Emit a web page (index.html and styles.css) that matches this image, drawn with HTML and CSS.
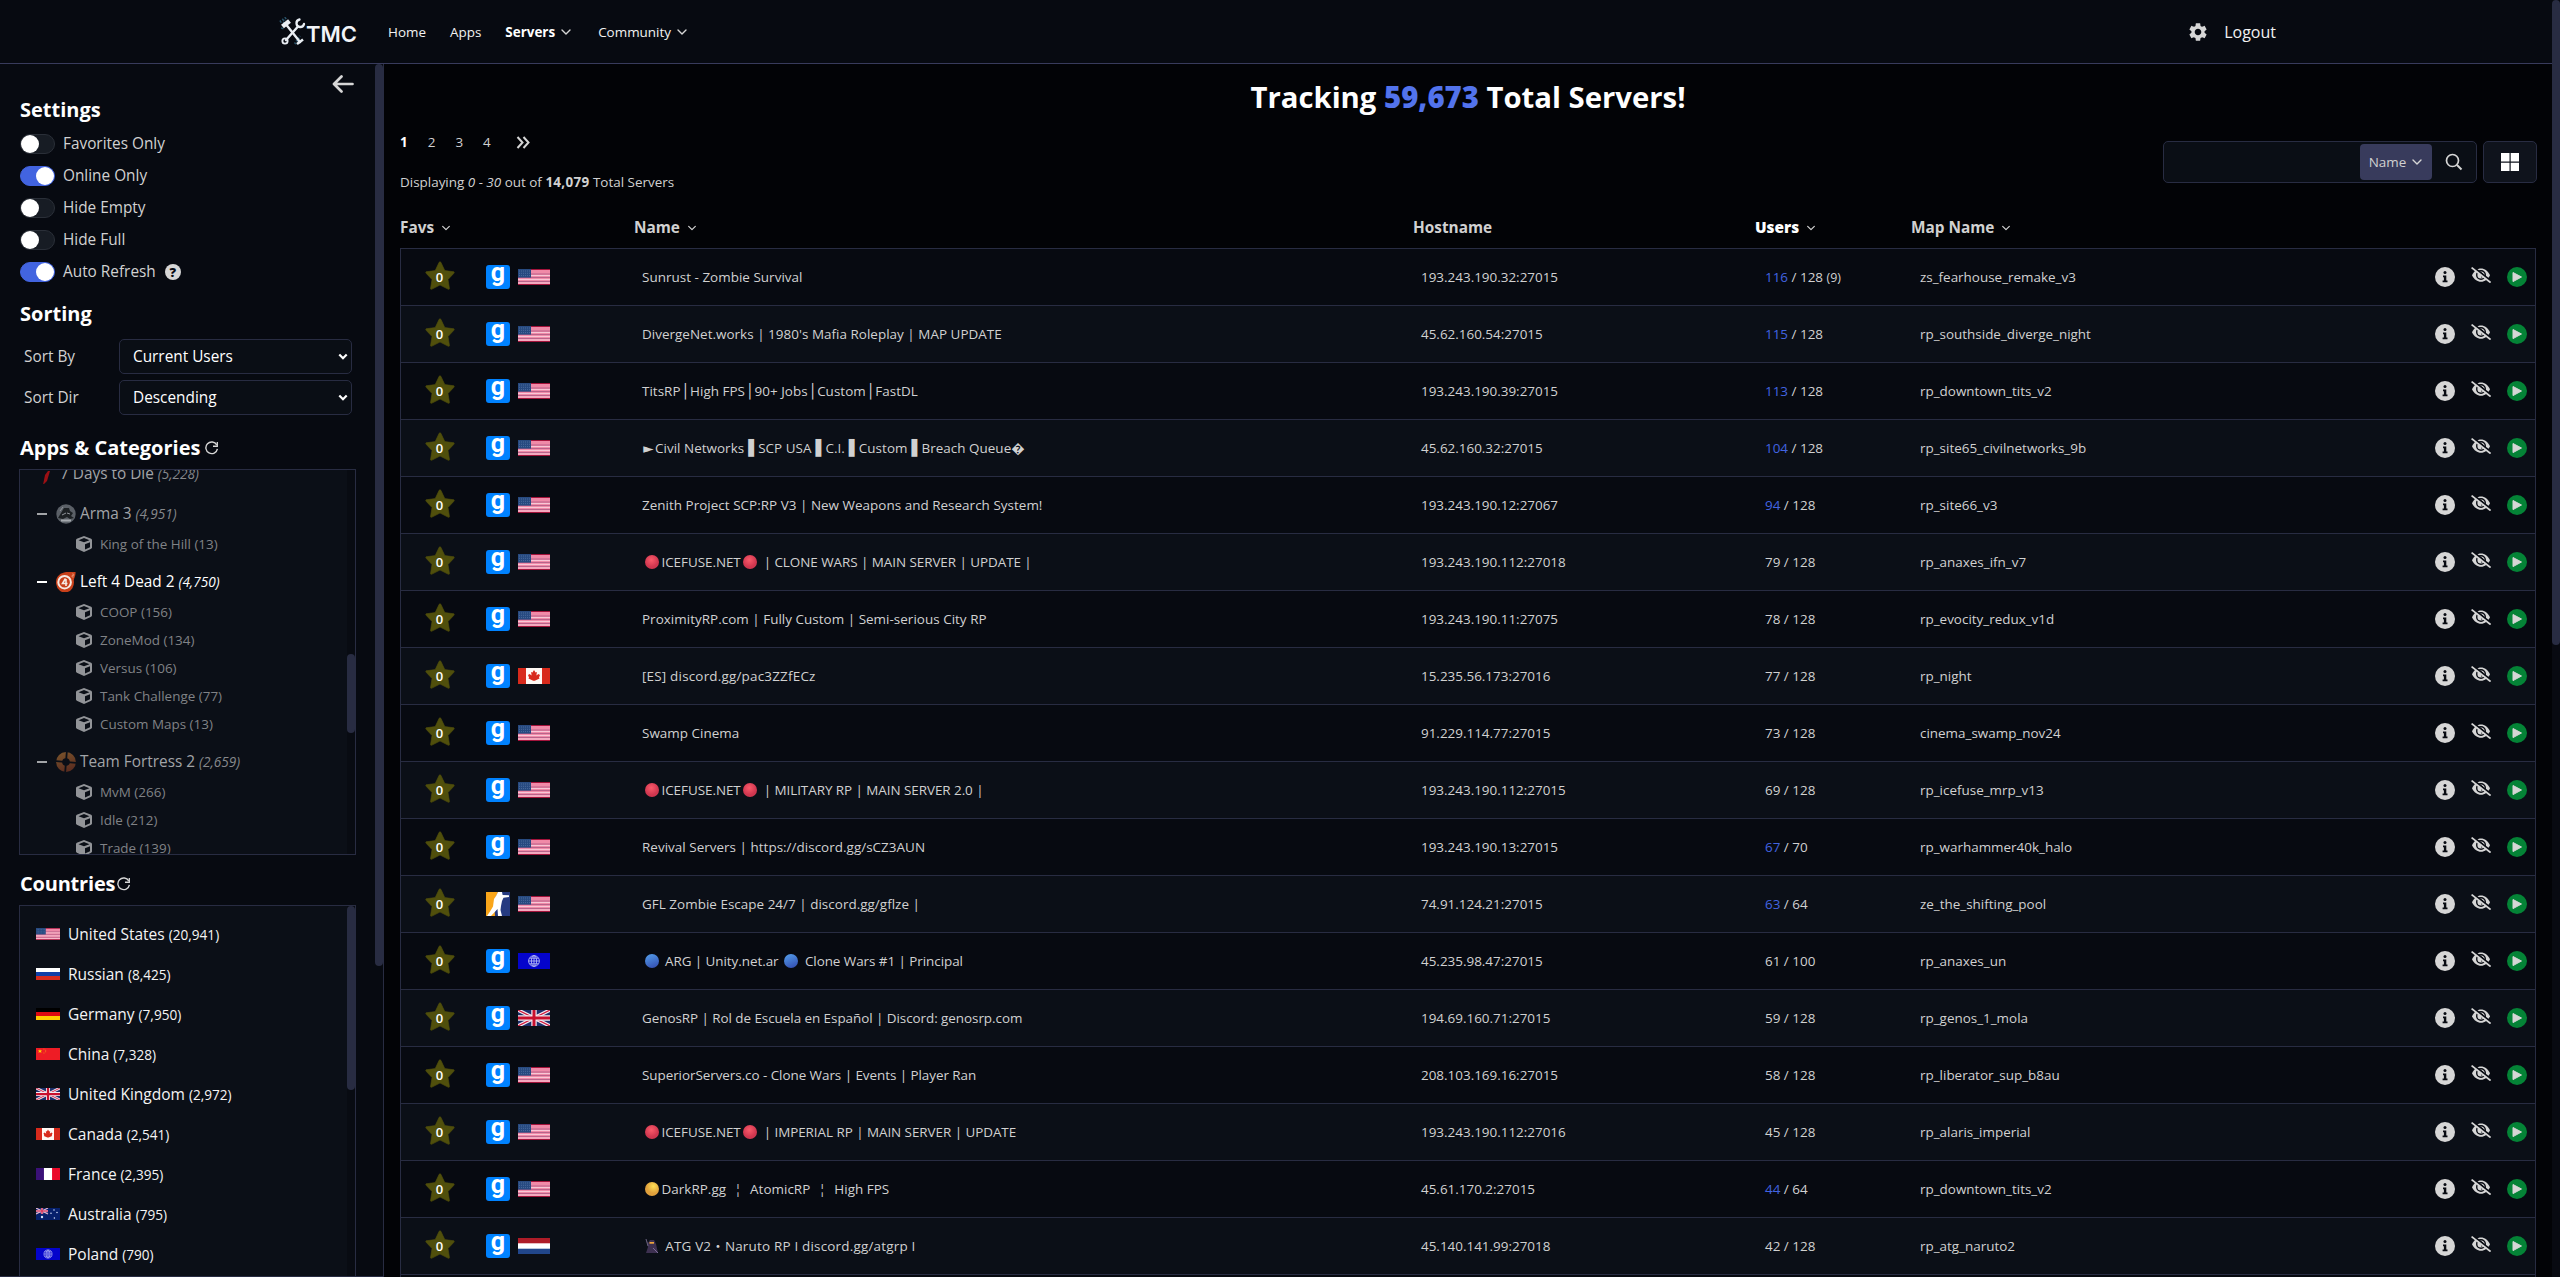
FILE: index.html
```html
<!DOCTYPE html>
<html lang="en">
<head>
<meta charset="utf-8">
<title>TMC - Servers</title>
<link rel="stylesheet" href="styles.css">
</head>
<body>
<svg class="sprite" aria-hidden="true">
  <symbol id="chev" viewBox="0 0 12 12"><path d="M2 4l4 4 4-4" fill="none" stroke="currentColor" stroke-width="1.4" stroke-linecap="round" stroke-linejoin="round"/></symbol>
  <symbol id="star" viewBox="0 0 30 29"><path d="M15 .8c.6 0 .9.500 1.200 1.100L19.800 9.600 29 10.800c.5.600.2 1.200-.5 1.900L23 18.500 24.500 27.800c-.3.700-.9.700-1.600.300L15 24 7.100 28.100c-.7.400-1.300.4-1.600-.3L7 18.500 1.500 12.700c-.7-.7-1-1.300-.5-1.900L10.200 9.600 13.800 1.900c.3-.6.600-1.100 1.200-1.100z" fill="#504f0c" stroke="#504f0c" stroke-width=".6" stroke-linejoin="round"/></symbol>
  <symbol id="refresh" viewBox="0 0 16 16"><path d="M13.6 4.2A6.2 6.2 0 1 0 14.3 8.4" fill="none" stroke="currentColor" stroke-width="1.5"/><path d="M14.2 1v4.6H9.6" fill="none" stroke="currentColor" stroke-width="1.4"/></symbol>
  <symbol id="cube" viewBox="0 0 16 16"><path fill="currentColor" fill-rule="evenodd" d="M8 0l7.2 2.7.8 1v8l-.8 1L8 16 .8 12.700 0 11.700v-8l.8-1zM8 2L2.500 4.200 8 6.300l5.500-2.100zM9 8.200v5.200l5-2.100V6.200z"/></symbol>
  <symbol id="info" viewBox="0 0 20 20"><circle cx="10" cy="10" r="10" fill="#d6d6d6"/><circle cx="10" cy="5.600" r="1.500" fill="#080b12"/><path d="M8 8.500h3.300v5h1.200v1.700H7.600v-1.700h1.300v-3.300H8z" fill="#080b12"/></symbol>
  <symbol id="eye" viewBox="0 0 20 16"><path d="M1 8.300C3 4 6.300 1.500 10 1.500S17 4 19 8.300c-2 4.200-5.300 6.500-9 6.500S3 12.500 1 8.300z" fill="#d6d6d6"/><circle cx="10" cy="8" r="4.300" fill="none" stroke="#080b12" stroke-width="1.400"/><path d="M10 5.800a2.400 2.400 0 0 1 .4 4.500" fill="none" stroke="#080b12" stroke-width="1.300"/><path d="M1.500-.500l19 15" stroke="#080b12" stroke-width="2"/><path d="M.6.600l19 15" stroke="#d6d6d6" stroke-width="1.700"/></symbol>
  <symbol id="play" viewBox="0 0 20 20"><circle cx="10" cy="10" r="10" fill="#048336"/><path d="M6 5.500l8.500 4.500L6 14.600z" fill="#d6d6d6" stroke="#d6d6d6" stroke-linejoin="round"/></symbol>
  <symbol id="red" viewBox="0 0 14 14"><circle cx="7" cy="7" r="7" fill="url(#gred)"/></symbol>
  <symbol id="blue" viewBox="0 0 14 14"><circle cx="7" cy="7" r="7" fill="url(#gblue)"/></symbol>
  <symbol id="yellow" viewBox="0 0 14 14"><circle cx="7" cy="7" r="7" fill="url(#gyel)"/></symbol>
  <symbol id="ninja" viewBox="0 0 14 14"><path d="M1 0l2 4 2-3 4 0 2 4 2 9H1l2-6z" fill="#3d3050"/><path d="M4.500 3h4.500v1.700H4.500z" fill="#f0a63c"/><path d="M1 0l2 7" stroke="#6a6480"/><path d="M8 9l5 5" stroke="#7c6c98"/></symbol>
  <symbol id="cs" viewBox="0 0 24 24"><path d="M0 0h24v24H0z" fill="#253a80"/><path d="M0 0h12L8 9 9 24H0z" fill="#faa61a"/><path d="M12 0h4l.6 3 6.400.300v1.600l-5.500.800L16 9l-1 5-.5 4L16 24h-4l-.5-7-3 3.200L5 24H1l3-4.500 3-5L8 7l2-3z" fill="#fff"/></symbol>
  <symbol id="us" viewBox="0 0 32 16" preserveAspectRatio="none"><path d="M0 0h32v16H0z" fill="#f08aa8"/><path d="M0 .5h32M0 15.500h32" stroke="#a3133b" stroke-width="1.100"/><path d="M0 5h32M0 8.500h32M0 12.500h32" stroke="#b8638a" stroke-width="1"/><path d="M0 6.500h32M0 10.500h32M0 14h32" stroke="#f7cfdb" stroke-width=".9"/><path d="M0 0h13v8.600H0z" fill="#274a80"/><path d="M1 2h11M1 4.300h11M1 6.600h11" stroke="#5a78a8" stroke-width=".7" stroke-dasharray="1 1"/></symbol>
  <symbol id="uk" viewBox="0 0 32 16" preserveAspectRatio="none"><path d="M0 0h32v16H0z" fill="#1c2f6b"/><path d="M0 0l32 16M32 0L0 16" stroke="#f4e9f0" stroke-width="3.600"/><path d="M0 0l32 16M32 0L0 16" stroke="#d0183c" stroke-width="1.200"/><path d="M16 0v16M0 8h32" stroke="#f4e9f0" stroke-width="5.400"/><path d="M16 0v16M0 8h32" stroke="#c8102e" stroke-width="3"/></symbol>
  <symbol id="ca" viewBox="0 0 32 16" preserveAspectRatio="none"><path d="M0 0h32v16H0z" fill="#fff8f4"/><path d="M0 0h8v16H0zM24 0h8v16h-8z" fill="#d82a1c"/><path d="M16 2l1.500 2.500 1.400-.5-.5 3.500 2-1.500 1.600 1-1 2.500.5 1-4.700 2.300h-1.600L10.500 10.500l.5-1-1-2.500 1.600-1 2 1.500-.5-3.500 1.400.5z" fill="#d82a1c"/></symbol>
  <symbol id="un" viewBox="0 0 32 16" preserveAspectRatio="none"><path d="M0 0h32v16H0z" fill="#0404cc"/><g fill="none" stroke="#b4b8f4" stroke-width=".9"><circle cx="16" cy="8" r="5.400"/><ellipse cx="16" cy="8" rx="2.600" ry="5.400"/><path d="M16 2.600v10.800M10.600 8h10.800M11.500 5.200h9M11.500 10.800h9"/></g></symbol>
  <symbol id="nl" viewBox="0 0 32 16" preserveAspectRatio="none"><path d="M0 0h32v16H0z" fill="#fff"/><path d="M0 0h32v5.300H0z" fill="#ae1c28"/><path d="M0 10.700h32V16H0z" fill="#21468b"/></symbol>
  <symbol id="ru" viewBox="0 0 32 16" preserveAspectRatio="none"><path d="M0 0h32v16H0z" fill="#fff"/><path d="M0 5.300h32V11H0z" fill="#0f3fa8"/><path d="M0 10.700h32V16H0z" fill="#d52b1e"/></symbol>
  <symbol id="de" viewBox="0 0 32 16" preserveAspectRatio="none"><path d="M0 0h32v16H0z" fill="#000"/><path d="M0 5.300h32V11H0z" fill="#dd0a12"/><path d="M0 10.700h32V16H0z" fill="#fc0"/></symbol>
  <symbol id="cn" viewBox="0 0 32 16" preserveAspectRatio="none"><path d="M0 0h32v16H0z" fill="#ee1c25"/><path d="M5.300 1.500l.8 1.800h2L6.600 4.500l.7 2-2-1.200-2 1.200.7-2-1.500-1.200h2z" fill="#fd0"/><path d="M10 1.500h1.200M12.300 3h1.200M12.300 5h1.200M10 6.700h1.200" stroke="#f8a01c"/></symbol>
  <symbol id="fr" viewBox="0 0 32 16" preserveAspectRatio="none"><path d="M0 0h32v16H0z" fill="#fff"/><path d="M0 0h10.600v16H0z" fill="#3b1178"/><path d="M21.400 0H32v16H21.400z" fill="#ea0a2a"/></symbol>
  <symbol id="au" viewBox="0 0 32 16" preserveAspectRatio="none"><path d="M0 0h32v16H0z" fill="#06206c"/><path d="M0 0l16 8M16 0L0 8" stroke="#e8b8d0" stroke-width="1.500"/><path d="M8 0v8M0 4h16" stroke="#e8b8d0" stroke-width="3"/><path d="M8 0v8M0 4h16" stroke="#d02048" stroke-width="1.500"/><g fill="#d8e4ff"><circle cx="8" cy="12" r="1.600"/><circle cx="24" cy="2.700" r="1"/><circle cx="20" cy="7" r="1"/><circle cx="28" cy="6" r="1"/><circle cx="24.500" cy="13.300" r="1"/></g></symbol>
  <radialGradient id="gred" cx=".45" cy=".35"><stop offset="0" stop-color="#fb5a6a"/><stop offset="1" stop-color="#d0364f"/></radialGradient>
  <linearGradient id="gblue" x2=".4" y2="1"><stop offset="0" stop-color="#55a0ec"/><stop offset="1" stop-color="#3757b8"/></linearGradient>
  <radialGradient id="gyel" cx=".6" cy=".3"><stop offset="0" stop-color="#ffe056"/><stop offset="1" stop-color="#e0a03c"/></radialGradient>
</svg>

<div class="page">
  <div class="app">
    <header class="top">
      <div class="logo">
        <svg width="27" height="29" viewBox="0 0 27 29"><path d="M1 5l7-5M3 12l3-9M16 27l5-8" stroke="#29536a" stroke-width="2.500" stroke-dasharray="1.500 1.500"/><g fill="none" stroke="#e9eef4" stroke-linecap="round"><path d="M7.500 8L21 25" stroke-width="2.400"/><path d="M19 9.500L7 23" stroke-width="2.400"/><path d="M3.500 9.500L10.500 4" stroke-width="4.600" stroke-linecap="butt"/><path d="M18 27l6-4.500" stroke-width="2.600" stroke-linecap="butt"/><path d="M20.500 2.500a3.800 3.800 0 1 0 4.500 4.500" stroke-width="2.300"/><circle cx="6" cy="24" r="2.600" stroke-width="1.900"/></g></svg>
        <span class="logo-text">TMC</span>
      </div>
      <nav class="nav">
        <a>Home</a>
        <a>Apps</a>
        <a class="on">Servers <svg class="chev"><use href="#chev"/></svg></a>
        <a>Community <svg class="chev"><use href="#chev"/></svg></a>
      </nav>
      <div class="account">
        <svg width="22" height="22" viewBox="0 0 24 24"><path fill="#d6d6d6" d="M19.140 12.940c.040-.300.060-.610.060-.940 0-.320-.020-.640-.070-.940l2.030-1.580c.180-.140.230-.410.120-.610l-1.920-3.320c-.120-.220-.370-.290-.590-.220l-2.390.960c-.500-.380-1.030-.700-1.620-.940l-.360-2.540c-.040-.240-.240-.410-.480-.410h-3.840c-.240 0-.430.170-.470.410l-.360 2.540c-.590.240-1.130.570-1.620.940l-2.390-.960c-.220-.080-.470 0-.590.220L2.740 8.870c-.120.210-.080.470.120.610l2.030 1.580c-.050.300-.090.630-.090.940s.020.640.070.940l-2.030 1.580c-.180.140-.230.410-.120.610l1.920 3.320c.120.220.370.290.590.220l2.390-.960c.500.380 1.030.700 1.620.940l.360 2.540c.050.240.240.410.480.410h3.840c.240 0 .440-.170.470-.410l.360-2.540c.590-.240 1.130-.560 1.620-.940l2.390.960c.220.080.470 0 .590-.220l1.920-3.320c.120-.220.070-.470-.120-.610l-2.010-1.580zM12 15.600c-1.980 0-3.600-1.620-3.600-3.600s1.620-3.600 3.600-3.600 3.600 1.620 3.600 3.600-1.620 3.600-3.600 3.600z"/></svg>
        <a>Logout</a>
      </div>
    </header>

    <div class="body">
      <aside class="side">
        <div class="side-content">
          <div class="collapse"><svg width="22" height="18" viewBox="0 0 22 18"><path d="M9.500 1.500L2 9l7.500 7.500M2.500 9H20.500" fill="none" stroke="#d6d6d6" stroke-width="2.700" stroke-linecap="round" stroke-linejoin="round"/></svg></div>
          <h2>Settings</h2>
          <div class="toggles">
            <label><i class="switch"></i>Favorites Only</label>
            <label><i class="switch checked"></i>Online Only</label>
            <label><i class="switch"></i>Hide Empty</label>
            <label><i class="switch"></i>Hide Full</label>
            <label><i class="switch checked"></i>Auto Refresh <span class="help">?</span></label>
          </div>
          <h2 class="h-sort">Sorting</h2>
          <div class="sort">
            <div class="field"><span>Sort By</span><div class="select">Current Users<svg width="10" height="8" viewBox="0 0 10 8"><path d="M1.300 1.500L5 5.200l3.700-3.700" fill="none" stroke="#fff" stroke-width="2.200"/></svg></div></div>
            <div class="field"><span>Sort Dir</span><div class="select">Descending<svg width="10" height="8" viewBox="0 0 10 8"><path d="M1.300 1.500L5 5.200l3.700-3.700" fill="none" stroke="#fff" stroke-width="2.200"/></svg></div></div>
          </div>
          <h2 class="h-apps">Apps &amp; Categories <svg class="ref"><use href="#refresh"/></svg></h2>
          <div class="box apps">
            <div class="list">
              <div class="group"><div class="game lone"><svg width="20" height="20"><path d="M12 7l2 0-3 10-4 4 2-10z" fill="#9c1014"/></svg><span>7 Days to Die <em>(5,228)</em></span></div></div>
              <div class="group">
                <div class="game"><i class="minus"></i><svg width="20" height="20" viewBox="0 0 20 20"><circle cx="10" cy="10" r="9.700" fill="#5b6067"/><path d="M2 14l3-5 3-5 5 0 1 3 3 2-2 3 3 2-4 1-3-2-4 2z" fill="#1c2023"/><path d="M4 7l3-4M11 9l3 1M6 11l4-2" stroke="#91959b"/><path d="M5 16.500h10" stroke="#a5a9ae" stroke-width="2"/></svg><span>Arma 3 <em>(4,951)</em></span></div>
                <div class="cat"><svg><use href="#cube"/></svg>King of the Hill (13)</div>
              </div>
              <div class="group">
                <div class="game on"><i class="minus"></i><svg width="20" height="20" viewBox="0 0 20 20"><path d="M10 0h9.500c.5 3-1.500 6-1.700 8.500A9 10 0 1 1 8 .500z" fill="#c8401a"/><circle cx="8.600" cy="10.200" r="6.300" fill="none" stroke="#f5e9e2" stroke-width="2"/><path d="M9.500 6.500L6.500 11.500h5M10 7v7" fill="none" stroke="#f5e9e2" stroke-width="1.600"/><path d="M16 2h1.700v1.500H16V5h1.800" fill="none" stroke="#f0a080" stroke-width=".7"/></svg><span>Left 4 Dead 2 <em>(4,750)</em></span></div>
                <div class="cat"><svg><use href="#cube"/></svg>COOP (156)</div>
                <div class="cat"><svg><use href="#cube"/></svg>ZoneMod (134)</div>
                <div class="cat"><svg><use href="#cube"/></svg>Versus (106)</div>
                <div class="cat"><svg><use href="#cube"/></svg>Tank Challenge (77)</div>
                <div class="cat"><svg><use href="#cube"/></svg>Custom Maps (13)</div>
              </div>
              <div class="group">
                <div class="game"><i class="minus"></i><svg width="20" height="20" viewBox="0 0 20 20"><defs><linearGradient id="tf" x2=".4" y2="1"><stop offset="0" stop-color="#7c562c"/><stop offset="1" stop-color="#5c2e20"/></linearGradient></defs><circle cx="10" cy="10" r="9.900" fill="url(#tf)"/><circle cx="10" cy="10" r="3.800" fill="#0b0f17"/><path d="M10.800 0L9.200 20M0 9.200l20 1.600" stroke="#0b0f17" stroke-width="1.800"/></svg><span>Team Fortress 2 <em>(2,659)</em></span></div>
                <div class="cat"><svg><use href="#cube"/></svg>MvM (266)</div>
                <div class="cat"><svg><use href="#cube"/></svg>Idle (212)</div>
                <div class="cat"><svg><use href="#cube"/></svg>Trade (139)</div>
              </div>
            </div>
            <div class="track"><div class="thumb"></div></div>
          </div>
          <h2 class="h-countries">Countries <svg class="ref"><use href="#refresh"/></svg></h2>
          <div class="box countries">
            <div class="list">
              <div class="country"><svg><use href="#us"/></svg><span>United States <small>(20,941)</small></span></div>
              <div class="country"><svg><use href="#ru"/></svg><span>Russian <small>(8,425)</small></span></div>
              <div class="country"><svg><use href="#de"/></svg><span>Germany <small>(7,950)</small></span></div>
              <div class="country"><svg><use href="#cn"/></svg><span>China <small>(7,328)</small></span></div>
              <div class="country"><svg><use href="#uk"/></svg><span>United Kingdom <small>(2,972)</small></span></div>
              <div class="country"><svg><use href="#ca"/></svg><span>Canada <small>(2,541)</small></span></div>
              <div class="country"><svg><use href="#fr"/></svg><span>France <small>(2,395)</small></span></div>
              <div class="country"><svg><use href="#au"/></svg><span>Australia <small>(795)</small></span></div>
              <div class="country"><svg><use href="#un"/></svg><span>Poland <small>(790)</small></span></div>
            </div>
            <div class="track"><div class="thumb"></div></div>
          </div>
        </div>
        <div class="side-scroll"><div class="thumb"></div></div>
      </aside>

      <main class="main">
        <h1>Tracking <b>59,673</b> Total Servers!</h1>
        <div class="toolbar">
          <div class="paging">
            <div class="pages"><a class="on">1</a><a>2</a><a>3</a><a>4</a><svg width="14" height="13" viewBox="0 0 14 13"><path d="M1.500 1l5 5.500-5 5.500M7.500 1l5 5.500-5 5.500" fill="none" stroke="#d6d6d6" stroke-width="2"/></svg></div>
            <div class="count">Displaying <em>0 - 30</em> out of <b>14,079</b> Total Servers</div>
          </div>
          <div class="tools">
            <div class="search">
              <div class="by">Name <svg class="chev"><use href="#chev"/></svg></div>
              <svg width="18" height="18" viewBox="0 0 18 18"><circle cx="7.500" cy="7.500" r="6" fill="none" stroke="#d6d6d6" stroke-width="1.700"/><path d="M12 12l4.500 4.500" stroke="#d6d6d6" stroke-width="2"/></svg>
            </div>
            <div class="grid-btn"><svg width="18" height="18" viewBox="0 0 18 18"><path d="M0 0h8.500v8.500H0zM9.700 0H18v8.500H9.700zM0 9.700h8.500V18H0zM9.700 9.700H18V18H9.700z" fill="#fff"/></svg></div>
          </div>
        </div>

        <div class="head">
          <span>Favs <svg class="chev"><use href="#chev"/></svg></span>
          <span>Name <svg class="chev"><use href="#chev"/></svg></span>
          <span>Hostname</span>
          <span><b>Users</b> <svg class="chev"><use href="#chev"/></svg></span>
          <span>Map Name <svg class="chev"><use href="#chev"/></svg></span>
        </div>

        <div class="rows">
          <div class="row"><div class="fav"><svg><use href="#star"/></svg><b>0</b></div><div class="kind"><i class="gm">g</i><svg><use href="#us"/></svg></div><div class="name">Sunrust - Zombie Survival</div><div>193.243.190.32:27015</div><div><u>116</u> / 128 <small>(9)</small></div><div>zs_fearhouse_remake_v3</div><div class="act"><svg><use href="#info"/></svg><svg class="eye"><use href="#eye"/></svg><svg><use href="#play"/></svg></div></div>
          <div class="row"><div class="fav"><svg><use href="#star"/></svg><b>0</b></div><div class="kind"><i class="gm">g</i><svg><use href="#us"/></svg></div><div class="name">DivergeNet.works | 1980's Mafia Roleplay | MAP UPDATE</div><div>45.62.160.54:27015</div><div><u>115</u> / 128</div><div>rp_southside_diverge_night</div><div class="act"><svg><use href="#info"/></svg><svg class="eye"><use href="#eye"/></svg><svg><use href="#play"/></svg></div></div>
          <div class="row"><div class="fav"><svg><use href="#star"/></svg><b>0</b></div><div class="kind"><i class="gm">g</i><svg><use href="#us"/></svg></div><div class="name">TitsRP<i class="bar">│</i>High FPS<i class="bar">│</i>90+ Jobs<i class="bar">│</i>Custom<i class="bar">│</i>FastDL</div><div>193.243.190.39:27015</div><div><u>113</u> / 128</div><div>rp_downtown_tits_v2</div><div class="act"><svg><use href="#info"/></svg><svg class="eye"><use href="#eye"/></svg><svg><use href="#play"/></svg></div></div>
          <div class="row"><div class="fav"><svg><use href="#star"/></svg><b>0</b></div><div class="kind"><i class="gm">g</i><svg><use href="#us"/></svg></div><div class="name"><i class="arrow">►</i>Civil Networks<i class="block">▌</i>SCP USA<i class="block">▌</i>C.I.<i class="block">▌</i>Custom<i class="block">▌</i>Breach Queue�</div><div>45.62.160.32:27015</div><div><u>104</u> / 128</div><div>rp_site65_civilnetworks_9b</div><div class="act"><svg><use href="#info"/></svg><svg class="eye"><use href="#eye"/></svg><svg><use href="#play"/></svg></div></div>
          <div class="row"><div class="fav"><svg><use href="#star"/></svg><b>0</b></div><div class="kind"><i class="gm">g</i><svg><use href="#us"/></svg></div><div class="name">Zenith Project SCP:RP V3 | New Weapons and Research System!</div><div>193.243.190.12:27067</div><div><u>94</u> / 128</div><div>rp_site66_v3</div><div class="act"><svg><use href="#info"/></svg><svg class="eye"><use href="#eye"/></svg><svg><use href="#play"/></svg></div></div>
          <div class="row"><div class="fav"><svg><use href="#star"/></svg><b>0</b></div><div class="kind"><i class="gm">g</i><svg><use href="#us"/></svg></div><div class="name tight"><svg class="dot"><use href="#red"/></svg>ICEFUSE.NET<svg class="dot"><use href="#red"/></svg> | CLONE WARS | MAIN SERVER | UPDATE |</div><div>193.243.190.112:27018</div><div>79 / 128</div><div>rp_anaxes_ifn_v7</div><div class="act"><svg><use href="#info"/></svg><svg class="eye"><use href="#eye"/></svg><svg><use href="#play"/></svg></div></div>
          <div class="row"><div class="fav"><svg><use href="#star"/></svg><b>0</b></div><div class="kind"><i class="gm">g</i><svg><use href="#us"/></svg></div><div class="name">ProximityRP.com | Fully Custom | Semi-serious City RP</div><div>193.243.190.11:27075</div><div>78 / 128</div><div>rp_evocity_redux_v1d</div><div class="act"><svg><use href="#info"/></svg><svg class="eye"><use href="#eye"/></svg><svg><use href="#play"/></svg></div></div>
          <div class="row"><div class="fav"><svg><use href="#star"/></svg><b>0</b></div><div class="kind"><i class="gm">g</i><svg><use href="#ca"/></svg></div><div class="name loose">[ES] discord.gg/pac3ZZfECz</div><div>15.235.56.173:27016</div><div>77 / 128</div><div>rp_night</div><div class="act"><svg><use href="#info"/></svg><svg class="eye"><use href="#eye"/></svg><svg><use href="#play"/></svg></div></div>
          <div class="row"><div class="fav"><svg><use href="#star"/></svg><b>0</b></div><div class="kind"><i class="gm">g</i><svg><use href="#us"/></svg></div><div class="name">Swamp Cinema</div><div>91.229.114.77:27015</div><div>73 / 128</div><div>cinema_swamp_nov24</div><div class="act"><svg><use href="#info"/></svg><svg class="eye"><use href="#eye"/></svg><svg><use href="#play"/></svg></div></div>
          <div class="row"><div class="fav"><svg><use href="#star"/></svg><b>0</b></div><div class="kind"><i class="gm">g</i><svg><use href="#us"/></svg></div><div class="name tight"><svg class="dot"><use href="#red"/></svg>ICEFUSE.NET<svg class="dot"><use href="#red"/></svg> | MILITARY RP | MAIN SERVER 2.0 |</div><div>193.243.190.112:27015</div><div>69 / 128</div><div>rp_icefuse_mrp_v13</div><div class="act"><svg><use href="#info"/></svg><svg class="eye"><use href="#eye"/></svg><svg><use href="#play"/></svg></div></div>
          <div class="row"><div class="fav"><svg><use href="#star"/></svg><b>0</b></div><div class="kind"><i class="gm">g</i><svg><use href="#us"/></svg></div><div class="name">Revival Servers | https://discord.gg/sCZ3AUN</div><div>193.243.190.13:27015</div><div><u>67</u> / 70</div><div>rp_warhammer40k_halo</div><div class="act"><svg><use href="#info"/></svg><svg class="eye"><use href="#eye"/></svg><svg><use href="#play"/></svg></div></div>
          <div class="row"><div class="fav"><svg><use href="#star"/></svg><b>0</b></div><div class="kind"><svg class="game-icon"><use href="#cs"/></svg><svg><use href="#us"/></svg></div><div class="name">GFL Zombie Escape 24/7 | discord.gg/gflze |</div><div>74.91.124.21:27015</div><div><u>63</u> / 64</div><div>ze_the_shifting_pool</div><div class="act"><svg><use href="#info"/></svg><svg class="eye"><use href="#eye"/></svg><svg><use href="#play"/></svg></div></div>
          <div class="row"><div class="fav"><svg><use href="#star"/></svg><b>0</b></div><div class="kind"><i class="gm">g</i><svg><use href="#un"/></svg></div><div class="name tight"><svg class="dot"><use href="#blue"/></svg> ARG | Unity.net.ar <svg class="dot"><use href="#blue"/></svg> Clone Wars #1 | Principal</div><div>45.235.98.47:27015</div><div>61 / 100</div><div>rp_anaxes_un</div><div class="act"><svg><use href="#info"/></svg><svg class="eye"><use href="#eye"/></svg><svg><use href="#play"/></svg></div></div>
          <div class="row"><div class="fav"><svg><use href="#star"/></svg><b>0</b></div><div class="kind"><i class="gm">g</i><svg><use href="#uk"/></svg></div><div class="name tight">GenosRP | Rol de Escuela en Español | Discord: genosrp.com</div><div>194.69.160.71:27015</div><div>59 / 128</div><div>rp_genos_1_mola</div><div class="act"><svg><use href="#info"/></svg><svg class="eye"><use href="#eye"/></svg><svg><use href="#play"/></svg></div></div>
          <div class="row"><div class="fav"><svg><use href="#star"/></svg><b>0</b></div><div class="kind"><i class="gm">g</i><svg><use href="#us"/></svg></div><div class="name tight">SuperiorServers.co - Clone Wars | Events | Player Ran</div><div>208.103.169.16:27015</div><div>58 / 128</div><div>rp_liberator_sup_b8au</div><div class="act"><svg><use href="#info"/></svg><svg class="eye"><use href="#eye"/></svg><svg><use href="#play"/></svg></div></div>
          <div class="row"><div class="fav"><svg><use href="#star"/></svg><b>0</b></div><div class="kind"><i class="gm">g</i><svg><use href="#us"/></svg></div><div class="name tight"><svg class="dot"><use href="#red"/></svg>ICEFUSE.NET<svg class="dot"><use href="#red"/></svg> | IMPERIAL RP | MAIN SERVER | UPDATE</div><div>193.243.190.112:27016</div><div>45 / 128</div><div>rp_alaris_imperial</div><div class="act"><svg><use href="#info"/></svg><svg class="eye"><use href="#eye"/></svg><svg><use href="#play"/></svg></div></div>
          <div class="row"><div class="fav"><svg><use href="#star"/></svg><b>0</b></div><div class="kind"><i class="gm">g</i><svg><use href="#us"/></svg></div><div class="name"><svg class="dot"><use href="#yellow"/></svg>DarkRP.gg<i class="dash">¦</i>AtomicRP<i class="dash">¦</i>High FPS</div><div>45.61.170.2:27015</div><div><u>44</u> / 64</div><div>rp_downtown_tits_v2</div><div class="act"><svg><use href="#info"/></svg><svg class="eye"><use href="#eye"/></svg><svg><use href="#play"/></svg></div></div>
          <div class="row"><div class="fav"><svg><use href="#star"/></svg><b>0</b></div><div class="kind"><i class="gm">g</i><svg><use href="#nl"/></svg></div><div class="name loose"><svg class="dot"><use href="#ninja"/></svg> ATG V2・Naruto RP I discord.gg/atgrp I</div><div>45.140.141.99:27018</div><div>42 / 128</div><div>rp_atg_naruto2</div><div class="act"><svg><use href="#info"/></svg><svg class="eye"><use href="#eye"/></svg><svg><use href="#play"/></svg></div></div>
          <div class="row"></div>
        </div>
      </main>
    </div>
  </div>
  <div class="page-scroll"><div class="thumb"></div></div>
</div>
</body>
</html>
```
FILE: styles.css
```css
* { box-sizing: border-box; }
body {
  margin: 0;
  background: #020306;
  color: #d1d1d1;
  font: 13.44px/20px "Open Sans", "Noto Sans CJK JP", "DejaVu Sans", sans-serif;
  overflow: hidden;
}
svg { display: block; flex: none; }
i { font-style: normal; }
.sprite { position: absolute; width: 0; height: 0; }
.page { display: flex; height: 1277px; overflow: hidden; }
.app { flex: 1; display: flex; flex-direction: column; min-width: 0; }
.thumb { background: #282c42; border-radius: 5px; }
.page-scroll { width: 8px; background: #080a11; }
.page-scroll .thumb { height: 645px; }

/* Header */
.top {
  display: flex; align-items: center; height: 64px; flex: none;
  padding: 0 276px 0 279px;
  background: #070a11; border-bottom: 1px solid #383b5c;
}
.logo { display: flex; align-items: center; width: 109px; height: 58px; }
.logo-text { font: 600 22px/30px "Inter", sans-serif; color: #f2f4f8; margin-top: 5px; }
.nav { display: flex; gap: 24px; color: #f2f2f2; }
.nav a { display: flex; align-items: center; gap: 5px; }
.nav .on { font-weight: 700; color: #fff; margin-right: 2px; }
.chev { width: 12px; height: 12px; color: #d6d6d6; }
.account { display: flex; align-items: center; gap: 15px; margin-left: auto; font-size: 16px; color: #f2f2f2; }

.body { flex: 1; display: flex; min-height: 0; }

/* Sidebar */
.side {
  display: flex; width: 384px; flex: none; overflow: hidden;
  background: #070a11; border-right: 1px solid #282c42; border-bottom: 1px solid #282c42;
}
.side-content { flex: 1; padding: 0 19px; overflow: hidden; }
.side-scroll { width: 8px; }
.side-scroll .thumb { height: 902px; }
.collapse { display: flex; justify-content: flex-end; height: 32px; padding: 11px 2px 0 0; }
h2 { display: flex; align-items: center; gap: 4px; margin: 0; padding-left: 1px; font-size: 20px; line-height: 28px; color: #fff; }
.ref { width: 15px; height: 15px; color: #d6d6d6; }
.toggles { padding: 4px 0 0 1px; font-size: 15.36px; }
.toggles label { display: flex; align-items: center; height: 32px; }
.switch { width: 35px; height: 20px; margin-right: 8px; padding: 1px; border-radius: 10px; background: #171c24; border: 1px solid #2a2f38; display: flex; align-items: center; }
.switch::after { content: ""; width: 18px; height: 18px; flex: none; margin-left: -1px; border-radius: 50%; background: #fff; }
.switch.checked { background: #4264e0; border-color: #4264e0; justify-content: flex-end; }
.switch.checked::after { margin: 0 -1px 0 0; }
.help { width: 16px; height: 16px; margin-left: 9px; border-radius: 50%; background: #d6d6d6; color: #070a11; font-size: 13px; font-weight: 800; line-height: 16px; text-align: center; }
.h-sort { margin-top: 12px; }
.sort { display: flex; flex-direction: column; gap: 6px; padding: 11px 4px 0 5px; font-size: 15.36px; }
.field { display: flex; align-items: center; justify-content: space-between; }
.select { display: flex; align-items: center; justify-content: space-between; width: 233px; height: 35px; padding: 0 3px 0 13px; border: 1px solid #282c42; border-radius: 5px; background: #0a0e15; color: #fff; }
.h-apps { margin-top: 19px; }
.h-countries { margin-top: 15px; gap: 1px; letter-spacing: -.2px; }
.box { display: flex; margin-top: 7px; width: 337px; border: 1px solid #282c42; background: #0b0f17; overflow: hidden; }
.box .list { flex: 1; padding-left: 16px; }
.track { width: 8px; background: #080b12; flex: none; }
.apps { height: 386px; }
.apps .list { display: flex; flex-direction: column; gap: 8px; margin-top: -12px; }
.apps .thumb { height: 79px; margin-top: 184px; }
.game { display: flex; align-items: center; height: 32px; font-size: 15.36px; color: #a2a4a7; white-space: pre; }
.game.on { color: #fff; }
.game span { margin-left: 4px; }
.game em { font-size: 13.6px; }
.game:not(.on) em { color: #86888b; }
.minus { width: 10px; height: 2px; margin: 0 9px 0 1px; background: currentColor; }
.cat { display: flex; align-items: center; height: 28px; padding-left: 40px; color: #808286; }
.cat svg { width: 16px; height: 16px; margin-right: 8px; color: #929498; }
.countries { height: 420px; }
.countries .list { padding-top: 8px; color: #f4f4f4; }
.countries .thumb { height: 184px; }
.country { display: flex; align-items: center; gap: 8px; height: 40px; font-size: 15.5px; }
.country svg { width: 24px; height: 12px; }
.country small { font-size: 13.6px; }

/* Main */
.main { flex: 1; padding: 15px 16px 0; min-width: 0; overflow: hidden; }
h1 { margin: 0; text-align: center; color: #fff; font-size: 29.3px; line-height: 36px; }
h1 b { color: #5273ec; }
.toolbar { display: flex; justify-content: space-between; align-items: center; margin-top: 16px; height: 61px; }
.pages { display: flex; align-items: center; gap: 20px; height: 20px; margin: 1px 0 20px; }
.pages .on { font-weight: 700; color: #fff; }
.pages svg { margin-left: 5px; }
.count b { letter-spacing: .3px; }
.tools { display: flex; gap: 6px; }
.search { display: flex; align-items: center; justify-content: flex-end; width: 314px; height: 42px; padding-right: 13px; border: 1px solid #282c42; border-radius: 5px; background: #0a0e15; }
.search > svg { margin-left: 13px; }
.by { display: flex; align-items: center; justify-content: center; gap: 5px; width: 72px; height: 36px; border-radius: 4px; background: #383b5c; }
.grid-btn { display: flex; align-items: center; justify-content: center; width: 54px; height: 42px; margin-right: -1px; border: 1px solid #282c42; border-radius: 5px; background: #0f131c; }
.head { display: grid; grid-template-columns: 234px 779px 342px 156px 1fr; margin: 24px 0 8px; font-size: 15.36px; font-weight: 700; line-height: 24px; }
.head span { display: flex; align-items: center; gap: 7px; }
.head b { color: #fff; }
.head .chev { width: 10px; height: 10px; }
.rows { border: 1px solid #282c42; border-top: 0; }
.row { display: grid; grid-template-columns: 85px 156px 779px 344px 155px 1fr auto; align-items: center; height: 57px; padding-right: 8px; border-top: 1px solid #282c42; background: #070a11; }
.row:nth-child(even) { background: #0b0f17; }
.row u { text-decoration: none; color: #4264e0; }
.row small { font-size: 12.4px; }
.name { letter-spacing: .03px; }
.tight { letter-spacing: -.05px; }
.loose { letter-spacing: .2px; }
.fav { display: grid; padding-left: 24px; justify-items: center; align-items: center; width: 54px; margin-top: -4px; }
.fav svg { grid-area: 1 / 1; width: 30px; height: 29px; }
.fav b { grid-area: 1 / 1; color: #fff; font-size: 13px; font-weight: 600; line-height: 16px; margin: 3px 1px 0 0; }
.kind { display: flex; align-items: center; gap: 8px; }
.kind svg { width: 32px; height: 16px; }
.kind .game-icon { width: 24px; height: 24px; }
.gm { width: 24px; height: 24px; border-radius: 3px; background: #0082ff; color: #fff; font: 700 25px/16px "Roboto", sans-serif; text-align: center; overflow: hidden; }
.dot { display: inline-block; width: 14px; height: 14px; margin: 0 3px 0 2.500px; vertical-align: -2px; }
.bar, .block { display: inline-block; font-family: "DejaVu Sans Mono", monospace; line-height: 16px; }
.bar { width: 9.500px; text-align: center; font-size: 14px; }
.block { width: 14px; padding-left: 4px; font-family: "DejaVu Sans", sans-serif; font-size: 15px; }
.arrow, .dash { display: inline-block; text-align: center; line-height: 18px; }
.arrow { width: 13px; }
.dash { width: 24px; }
.act { display: flex; gap: 16px; }
.act svg { width: 20px; height: 20px; }
.act .eye { height: 16px; }
```
